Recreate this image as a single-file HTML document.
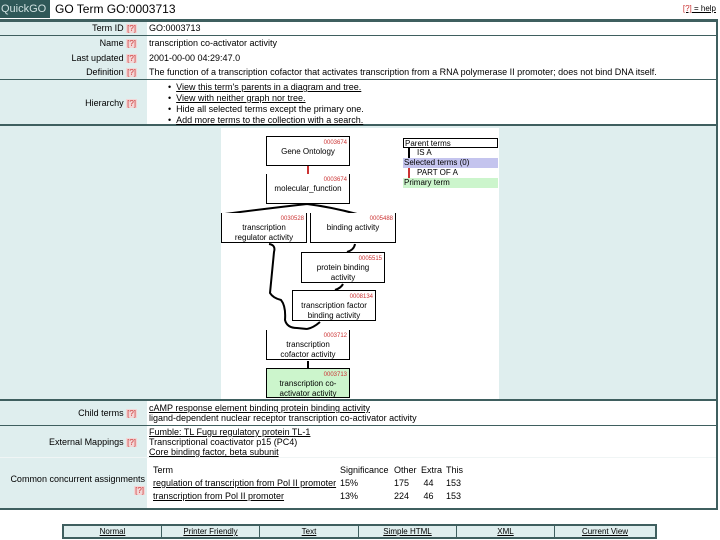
<!DOCTYPE html>
<html><head><meta charset="utf-8"><style>
*{margin:0;padding:0;box-sizing:border-box}
body{width:720px;height:540px;background:#fff;font-family:"Liberation Sans",sans-serif;font-size:9px;color:#000;position:relative;overflow:hidden}
.a{position:absolute;white-space:nowrap}
.lab{position:absolute;left:0;width:137px;text-align:right}
.h{color:#c33;background:#f3d6d6;font-size:8px;padding:0 1px}
.v{position:absolute;left:149px}
u{text-decoration:underline}
.box{position:absolute;background:#fff;border:1px solid #000;border-top:none;text-align:center;font-size:8px;line-height:10px}
.id{position:absolute;right:2px;top:1px;color:#c33;font-size:6px}
.nav{position:absolute;top:524px;height:15px;border:2px solid #3f5f5f;background:#dfeeee;}
.nav div{position:absolute;top:0;height:11px;border-right:1px solid #3f5f5f;text-align:center;text-decoration:underline;font-size:8px;line-height:11px}
</style></head><body>
<div class="a" style="left:0;top:0;width:50px;height:18px;background:#2f5858;color:#cfe0e0;font-size:11px;line-height:18px;padding-left:1px">QuickGO</div>
<div class="a" style="left:55px;top:2px;font-size:12px">GO Term GO:0003713</div>
<div class="a" style="right:4px;top:4px;font-size:8px"><u><span style="color:#c33">[?]</span> = help</u></div>
<div class="a" style="left:0;top:19px;width:718px;height:491px;background:#dfeeee;border:2px solid #3f5f5f;border-left:none;border-top:3px solid #3f5f5f"></div>
<div class="a" style="left:147px;top:22px;width:569px;height:103px;background:#fff"></div>
<div class="a" style="left:147px;top:401px;width:569px;height:107px;background:#fff"></div>
<div class="a" style="left:0;top:35px;width:716px;height:1px;background:#3f5f5f"></div>
<div class="a" style="left:0;top:79px;width:716px;height:1px;background:#3f5f5f"></div>
<div class="a" style="left:0;top:124px;width:716px;height:2px;background:#3f5f5f"></div>
<div class="a" style="left:0;top:399px;width:716px;height:2px;background:#3f5f5f"></div>
<div class="a" style="left:0;top:425px;width:716px;height:1px;background:#3f5f5f"></div>
<div class="a" style="left:0;top:457px;width:716px;height:1px;background:#f0f5f5"></div>

<div class="lab" style="top:23px">Term ID <span class="h">[?]</span></div><div class="v" style="top:23px">GO:0003713</div>
<div class="lab" style="top:38px">Name <span class="h">[?]</span></div><div class="v" style="top:38px">transcription co-activator activity</div>
<div class="lab" style="top:53px">Last updated <span class="h">[?]</span></div><div class="v" style="top:53px">2001-00-00 04:29:47.0</div>
<div class="lab" style="top:67px">Definition <span class="h">[?]</span></div><div class="v" style="top:67px">The function of a transcription cofactor that activates transcription from a RNA polymerase II promoter; does not bind DNA itself.</div>
<div class="lab" style="top:98px">Hierarchy <span class="h">[?]</span></div>
<div class="a" style="left:168px;top:82px;line-height:11px">• &nbsp;<u>View this term's parents in a diagram and tree.</u><br>• &nbsp;<u>View with neither graph nor tree.</u><br>• &nbsp;Hide all selected terms except the primary one.<br>• &nbsp;<u>Add more terms to the collection with a search.</u></div>

<div class="a" style="left:221px;top:128px;width:278px;height:271px;background:#fff"></div>
<svg class="a" style="left:221px;top:128px" width="278" height="271"><g fill="none" stroke="#000" stroke-width="2">
<path d="M4 86 Q50 80 86 76 Q110 79 136 86"/>
<path d="M48 116 Q55 117 53 124 L49 165 Q52 170 60 172 Q65 178 64 192 Q66 200 76 200 L86 201"/>
<path d="M99 194 Q92 200 86 201"/>
<path d="M134 116 Q133 122 126 124"/>
<path d="M122 156 Q120 160 114 162"/></g></svg>
<div class="box" style="left:266px;top:136px;width:84px;height:30px;border-top:1px solid #000"><span class="id">0003674</span><br>Gene Ontology</div>
<div class="a" style="left:307px;top:166px;width:2px;height:8px;background:#c33"></div>
<div class="box" style="left:266px;top:174px;width:84px;height:30px"><span class="id">0003674</span><br>molecular_function</div>
<div class="box" style="left:221px;top:213px;width:86px;height:30px"><span class="id">0030528</span><br>transcription<br>regulator activity</div>
<div class="box" style="left:310px;top:213px;width:86px;height:30px"><span class="id">0005488</span><br>binding activity</div>
<div class="box" style="left:301px;top:252px;width:84px;height:31px;border-top:1px solid #000"><span class="id">0005515</span><br>protein binding<br>activity</div>
<div class="box" style="left:292px;top:290px;width:84px;height:31px;border-top:1px solid #000"><span class="id">0008134</span><br>transcription factor<br>binding activity</div>
<div class="box" style="left:266px;top:330px;width:84px;height:30px"><span class="id">0003712</span><br>transcription<br>cofactor activity</div>
<div class="a" style="left:307px;top:361px;width:2px;height:7px;background:#000"></div>
<div class="box" style="left:266px;top:368px;width:84px;height:30px;background:#ccf5cc;border-top:1px solid #000"><span class="id">0003713</span><br>transcription co-<br>activator activity</div>
<div class="a" style="left:403px;top:138px;width:95px;height:59px;font-size:8px;line-height:9px">
<div style="border:1px solid #000;height:10px;padding-left:1px">Parent terms</div>
<div style="height:10px;padding-left:14px;position:relative"><span style="position:absolute;left:5px;top:0;width:2px;height:10px;background:#000"></span>IS A</div>
<div style="background:#c4c4ee;height:10px;padding-left:1px">Selected terms (0)</div>
<div style="height:10px;padding-left:14px;position:relative"><span style="position:absolute;left:5px;top:0;width:2px;height:10px;background:#c33"></span>PART OF A</div>
<div style="background:#ccf5cc;height:10px;padding-left:1px">Primary term</div></div>

<div class="lab" style="top:408px">Child terms <span class="h">[?]</span></div>
<div class="v" style="top:403px;line-height:10px"><u>cAMP response element binding protein binding activity</u><br>ligand-dependent nuclear receptor transcription co-activator activity</div>
<div class="lab" style="top:437px">External Mappings <span class="h">[?]</span></div>
<div class="v" style="top:427px;line-height:10px"><u>Fumble: TL Fugu regulatory protein TL-1</u><br>Transcriptional coactivator p15 (PC4)<br><u>Core binding factor, beta subunit</u></div>
<div class="lab" style="top:474px;width:145px;line-height:11px">Common concurrent assignments<br><span class="h">[?]</span></div>
<div class="a" style="left:153px;top:464px;line-height:13px">Term<br><u>regulation of transcription from Pol II promoter</u><br><u>transcription from Pol II promoter</u></div>
<div class="a" style="left:340px;top:464px;line-height:13px">Significance<br>15%<br>13%</div>
<div class="a" style="left:394px;top:464px;line-height:13px">Other<br>175<br>224</div>
<div class="a" style="left:421px;top:464px;line-height:13px">Extra<br>&nbsp;44<br>&nbsp;46</div>
<div class="a" style="left:446px;top:464px;line-height:13px">This<br>153<br>153</div>

<div class="nav" style="left:62px;width:595px">
<div style="left:0;width:98px">Normal</div><div style="left:98px;width:98px">Printer Friendly</div><div style="left:196px;width:99px">Text</div><div style="left:295px;width:98px">Simple HTML</div><div style="left:393px;width:98px">XML</div><div style="left:491px;width:100px;border:none">Current View</div></div>
</body></html>
